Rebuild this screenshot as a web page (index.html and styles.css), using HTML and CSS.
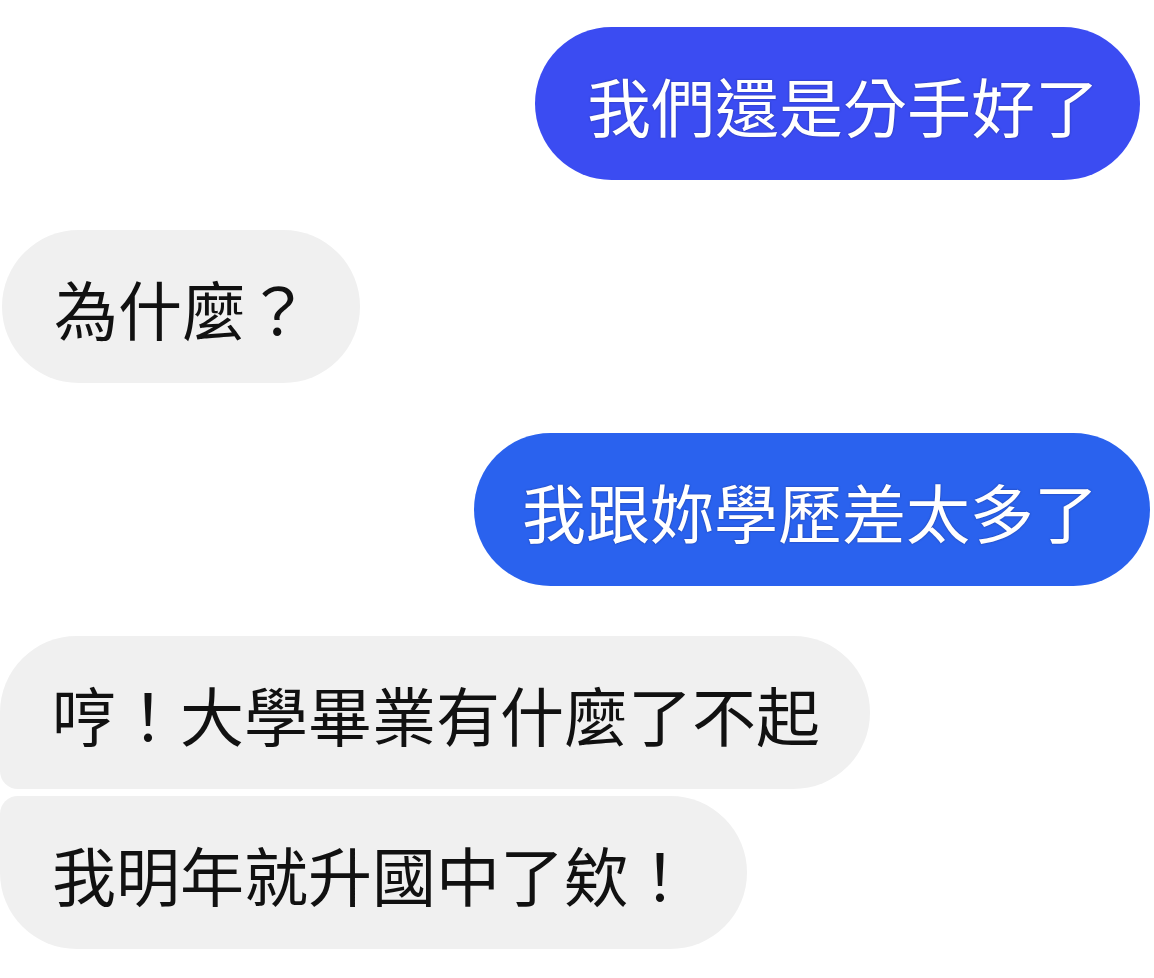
FILE: index.html
```html
<!DOCTYPE html>
<html lang="zh-Hant">
<head>
  <meta charset="UTF-8">
  <meta name="viewport" content="width=device-width, initial-scale=1.0">
  <title>聊天</title>
  <link rel="stylesheet" href="styles.css">
</head>
<body>
  <div class="chat">
    <div class="msg msg-me msg-first">我們還是分手好了</div>
    <div class="msg msg-them msg-single">為什麼？</div>
    <div class="msg msg-me msg-second">我跟妳學歷差太多了</div>
    <div class="group">
      <div class="msg msg-them msg-top">哼！大學畢業有什麼了不起</div>
      <div class="msg msg-them msg-bottom">我明年就升國中了欸！</div>
    </div>
  </div>
</body>
</html>
```

FILE: styles.css
```css
body {
  margin: 0;
  background-color: #fff;
  font-family: "Noto Sans CJK TC", "Noto Sans", sans-serif;
}
.chat {
  display: flex;
  flex-direction: column;
  gap: 50px;
  padding-top: 27px;
}
.group {
  display: flex;
  flex-direction: column;
  gap: 7px;
}
.msg {
  display: flex;
  align-items: center;
  height: 153px;
  box-sizing: border-box;
  padding: 0 50px 0 52px;
  font-size: 64px;
  line-height: 1;
  border-radius: 77px;
  white-space: nowrap;
  width: max-content;
}
.msg-me {
  align-self: flex-end;
  color: #fff;
  text-shadow: 0 0 2px rgba(20, 30, 90, 0.6);
}
.msg-them {
  align-self: flex-start;
  background-color: #f0f0f0;
  color: #111;
}
.msg-first {
  background-color: #3b4cf2;
  margin-right: 14px;
  padding-right: 41px;
}
.msg-second {
  background-color: #2a62ee;
  margin-right: 4px;
  padding-left: 48px;
  padding-right: 52px;
}
.msg-single {
  margin-left: 2px;
}
.msg-top {
  border-radius: 77px 77px 77px 18px;
}
.msg-bottom {
  border-radius: 18px 77px 77px 77px;
  padding-right: 55px;
}
```
